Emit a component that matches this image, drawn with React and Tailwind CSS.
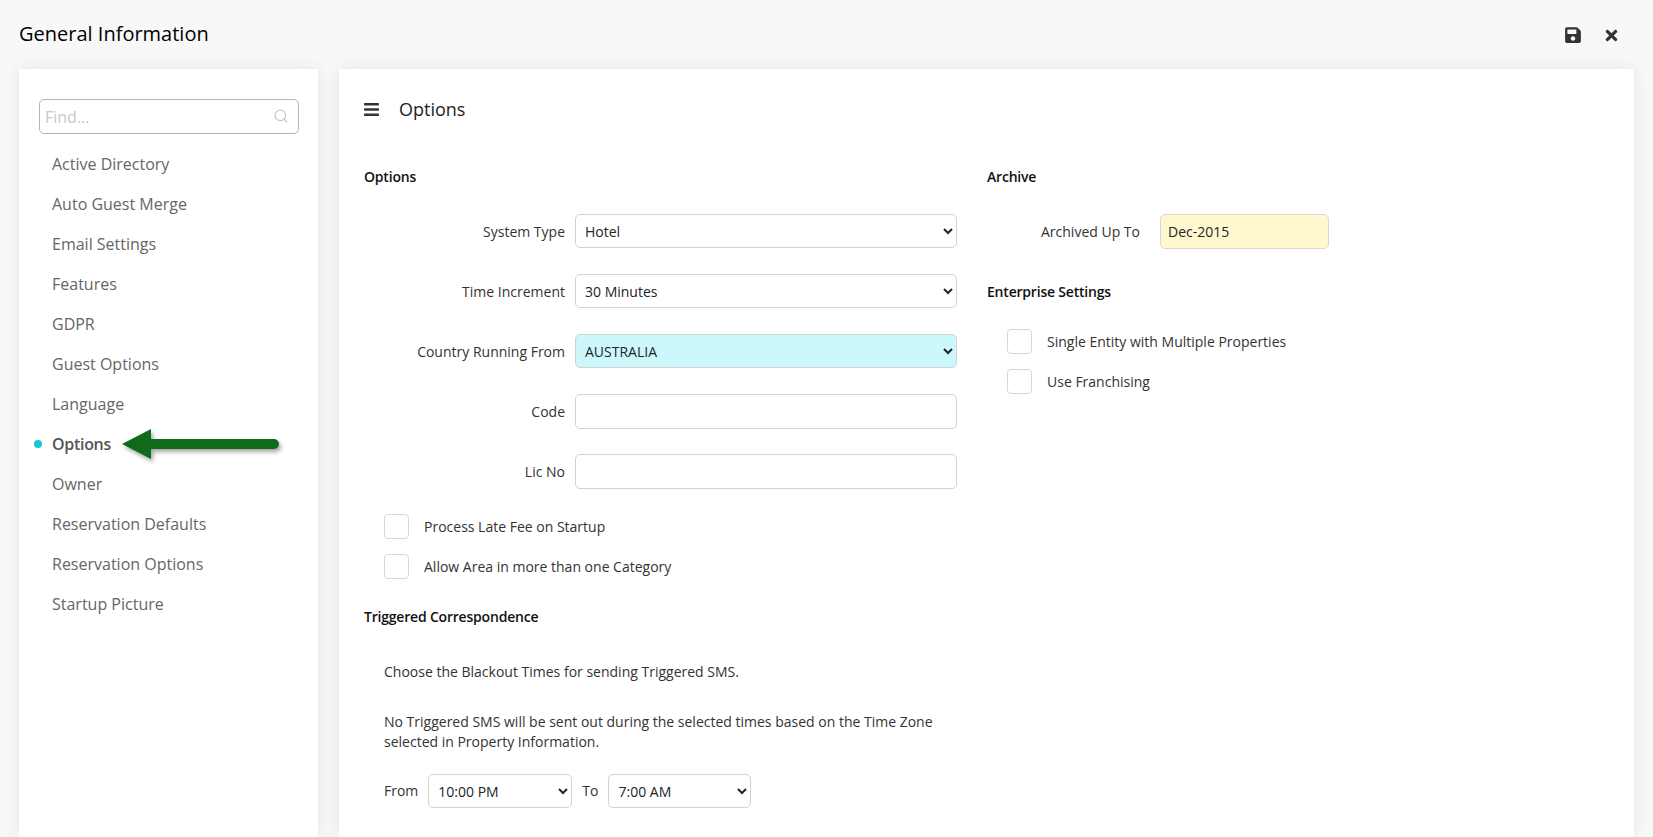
import React from "react";
import { Search } from "lucide-react";
import { FaBars, FaSave, FaTimes } from "react-icons/fa";

const navItems = [
  "Active Directory",
  "Auto Guest Merge",
  "Email Settings",
  "Features",
  "GDPR",
  "Guest Options",
  "Language",
  "Options",
  "Owner",
  "Reservation Defaults",
  "Reservation Options",
  "Startup Picture",
];

const fieldClass =
  "rounded-[5px] border border-[#d2d2d2] text-[14px] text-[#212529] outline-none";

function Heading({ children }) {
  return (
    <h3 className="text-[14px] leading-5 font-semibold tracking-[-0.2px] text-[#111]">{children}</h3>
  );
}

function SelectRow({ label, value, tint }) {
  return (
    <div className="flex h-[35px] items-center">
      <label className="w-[211px] shrink-0 pr-[10px] text-right text-[14px] text-[#333]">{label}</label>
      <select
        defaultValue={value}
        className={`${fieldClass} h-[34px] min-w-0 flex-1 self-start pl-[5px] ${tint ? "bg-[#ccf7fb]" : "bg-white"}`}
      >
        <option>{value}</option>
      </select>
    </div>
  );
}

function InputRow({ label }) {
  return (
    <div className="flex h-[35px] items-center">
      <label className="w-[211px] shrink-0 pr-[10px] text-right text-[14px] text-[#333]">{label}</label>
      <input className={`${fieldClass} h-[35px] min-w-0 flex-1 bg-white px-[9px]`} />
    </div>
  );
}

function CheckRow({ label }) {
  return (
    <label className="flex h-[26px] items-center">
      <input
        type="checkbox"
        className="h-[25px] w-[25px] appearance-none rounded-[4px] border border-[#d8d8d8] bg-white"
      />
      <span className="ml-[15px] text-[14px] text-[#333]">{label}</span>
    </label>
  );
}

function Arrow() {
  return (
    <svg
      className="absolute top-[-16px] left-[102px] drop-shadow-[2px_3px_2px_rgba(0,0,0,0.35)]"
      width="159"
      height="32"
      viewBox="0 0 159 32"
    >
      <path d="M1 16 L30 1 V11 H153 a5 5 0 0 1 0 10 H30 V31 Z" fill="#0f6b1a" />
    </svg>
  );
}

export default function App() {
  return (
    <div className="flex h-[837px] flex-col overflow-hidden bg-[#f8f8f8] font-['Open_Sans',sans-serif]">
      <header className="flex h-[69px] shrink-0 items-start justify-between px-[19px] pt-[20px]">
        <h1 className="text-[20px] leading-[28px] font-medium text-black">General Information</h1>
        <div className="flex items-center gap-[22px] pt-[6px] pr-[15px] text-[#333]">
          <FaSave className="h-[18px] w-[18px]" />
          <FaTimes className="h-[17px] w-[15px]" />
        </div>
      </header>

      <div className="flex min-h-0 flex-1 gap-[21px] px-[19px]">
        <aside className="w-[299px] shrink-0 bg-white pt-[30px] shadow-[0_0_16px_rgba(0,0,0,0.08)]">
          <div className="relative mr-[19px] ml-[20px]">
            <input
              placeholder="Find..."
              className="h-[35px] w-full rounded-[5px] border border-[#b5b5b5] px-[5px] text-[16px] outline-none placeholder:text-[#c8c8c8]"
            />
            <Search
              className="absolute top-[9px] right-[10px] h-[16px] w-[16px] text-[#c4c4c4]"
              strokeWidth={1.75}
            />
          </div>
          <nav className="mt-[10px]">
            {navItems.map((item) => {
              const active = item === "Options";
              return (
                <div key={item} className="relative flex h-[40px] items-center pl-[33px]">
                  {active && (
                    <span className="absolute left-[15px] h-[8px] w-[8px] rounded-full bg-[#14c8d8]" />
                  )}
                  <span
                    className={`text-[16px] ${active ? "font-semibold tracking-[-0.3px] text-[#555]" : "text-[#666]"}`}
                  >
                    {item}
                  </span>
                  {active && (
                    <div className="absolute top-1/2 left-0 h-0 w-0">
                      <Arrow />
                    </div>
                  )}
                </div>
              );
            })}
          </nav>
        </aside>

        <main className="min-w-0 flex-1 bg-white px-[25px] shadow-[0_0_16px_rgba(0,0,0,0.08)]">
          <div className="flex h-[80px] items-center">
            <FaBars className="h-[17px] w-[15px] text-[#333]" />
            <h2 className="ml-[20px] text-[18px] font-medium text-[#222]">Options</h2>
          </div>

          <div className="mt-[18px] flex gap-[30px]">
            <section className="w-[593px] shrink-0">
              <Heading>Options</Heading>
              <div className="mt-[27px] flex flex-col gap-[25px]">
                <SelectRow label="System Type" value="Hotel" />
                <SelectRow label="Time Increment" value="30 Minutes" />
                <SelectRow label="Country Running From" value="AUSTRALIA" tint />
                <InputRow label="Code" />
                <InputRow label="Lic No" />
              </div>
              <div className="mt-[24px] flex flex-col gap-[14px] pl-[20px]">
                <CheckRow label="Process Late Fee on Startup" />
                <CheckRow label="Allow Area in more than one Category" />
              </div>
              <div className="mt-[28px]">
                <Heading>Triggered Correspondence</Heading>
              </div>
              <div className="pl-[20px] text-[14px] leading-[20px] text-[#333]">
                <p className="mt-[35px]">Choose the Blackout Times for sending Triggered SMS.</p>
                <p className="mt-[30px]">
                  No Triggered SMS will be sent out during the selected times based on the Time Zone
                  selected in Property Information.
                </p>
                <div className="mt-[22px] flex items-center">
                  <span>From</span>
                  <select className={`${fieldClass} ml-[10px] h-[34px] w-[144px] bg-white pl-[5px]`}>
                    <option>10:00 PM</option>
                  </select>
                  <span className="ml-[10px]">To</span>
                  <select className={`${fieldClass} ml-[10px] h-[34px] w-[143px] bg-white pl-[5px]`}>
                    <option>7:00 AM</option>
                  </select>
                </div>
              </div>
            </section>

            <section className="flex-1">
              <Heading>Archive</Heading>
              <div className="mt-[27px] flex h-[35px] items-center">
                <label className="w-[153px] text-right text-[14px] text-[#333]">Archived Up To</label>
                <input
                  defaultValue="Dec-2015"
                  className="ml-[20px] h-[35px] w-[169px] rounded-[5px] border border-[#d8d8d8] bg-[#fff8ce] px-[7px] text-[14px] text-[#212529] outline-none"
                />
              </div>
              <div className="mt-[33px]">
                <Heading>Enterprise Settings</Heading>
              </div>
              <div className="mt-[26px] flex flex-col gap-[14px] pl-[20px]">
                <CheckRow label="Single Entity with Multiple Properties" />
                <CheckRow label="Use Franchising" />
              </div>
            </section>
          </div>
        </main>
      </div>
    </div>
  );
}
